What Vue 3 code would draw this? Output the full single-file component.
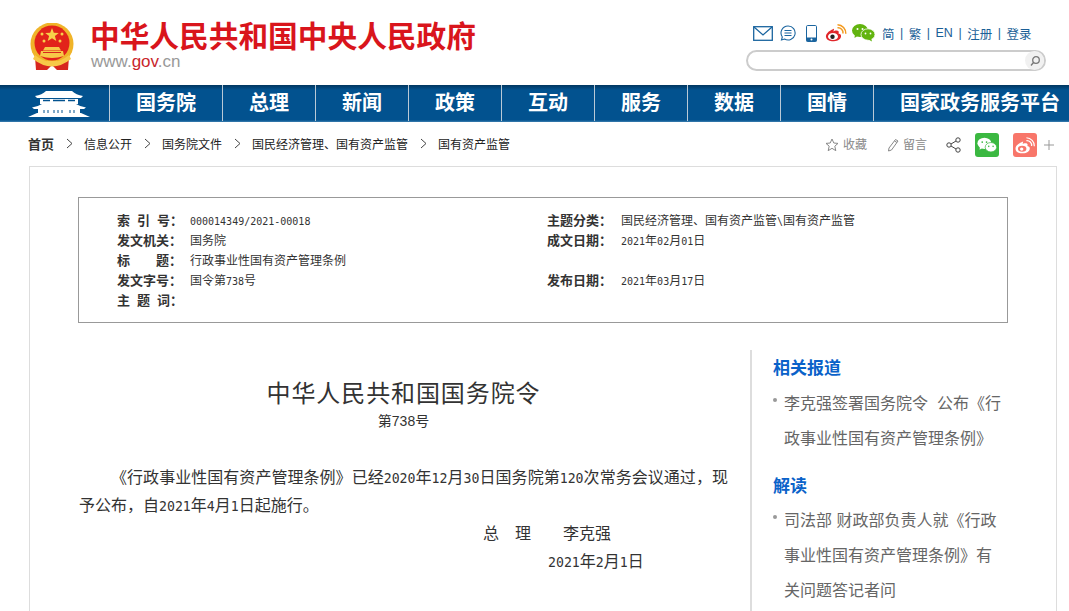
<template>
  <div class="page">
    <header class="top">
      <div class="brand">
        <svg class="emblem" width="44" height="47" viewBox="0 0 44 47">
          <path d="M5 34 L6 47 H17 L22 42 L27 47 H38 L39 34 Z" fill="#d7261e" />
          <circle cx="22" cy="21" r="21.500" fill="#f0b429" />
          <circle cx="22" cy="20" r="17.500" fill="#e2231a" />
          <path d="M5 32 Q22 46 39 32 L41 36 Q22 51 3 36 Z" fill="#f7c948" />
          <path d="M11 28 H33 L34 33 Q22 37 10 33 Z" fill="#f7c948" />
          <path d="M15 24 H29 L31 27.500 H13 Z" fill="#f7c948" />
          <rect x="13" y="29" width="18" height="1" fill="#d7261e" />
          <path d="M22 5 l1.800 4.800 5 .2 -3.900 3.100 1.400 4.900 -4.300 -2.800 -4.300 2.800 1.400 -4.900 -3.900 -3.100 5 -.2 Z" fill="#f7d04a" />
          <circle cx="12" cy="11" r="1.500" fill="#f7d04a" />
          <circle cx="32" cy="11" r="1.500" fill="#f7d04a" />
          <circle cx="14" cy="18" r="1.500" fill="#f7d04a" />
          <circle cx="30" cy="18" r="1.500" fill="#f7d04a" />
          <path d="M17 38 H27 V42 H17 Z" fill="#f7c948" />
        </svg>
        <div class="brand-text">
          <div class="site-name">中华人民共和国中央人民政府</div>
          <div class="site-url">www.<b>gov</b>.cn</div>
        </div>
      </div>
      <div class="tools">
        <div class="tool-row">
          <svg width="20" height="15" viewBox="0 0 20 15" fill="none" stroke="#1b659f" stroke-width="1.300">
            <rect x=".7" y=".7" width="18.600" height="13.600" />
            <path d="M1 1 L10 9 L19 1" />
          </svg>
          <svg class="ml7" width="16" height="16" viewBox="0 0 16 16" fill="none" stroke="#1b659f" stroke-width="1.100">
            <path d="M8 1 a7 7 0 1 1 -3.500 13 L1.500 15 L2.300 12 A7 7 0 0 1 8 1 Z" />
            <path d="M4.500 5.500 H11.500 M4.500 8 H11.500 M4.500 10.500 H11.500" />
          </svg>
          <svg class="ml10" width="11" height="17" viewBox="0 0 11 17">
            <rect x=".5" y=".5" width="10" height="16" rx="1.200" fill="#fff" stroke="#1b659f" />
            <rect x=".5" y="12.500" width="10" height="4" fill="#1b659f" />
            <circle cx="5.500" cy="14.500" r="1" fill="#fff" />
          </svg>
          <svg class="ml8" width="22" height="18" viewBox="0 0 21 18">
            <path d="M8 5 C3 7 0 10 .5 13 C1 16.500 5 17.500 8.500 17.300 C12.500 17 16 15 15.500 11.500 C15.300 10 13.500 9.800 13 9.500 C13.800 7.500 13 6.500 11 6.500 C9.500 6.500 8.500 7 8 7.500 C8.400 5.500 9 4.500 8 5 Z" fill="#e0262a" />
            <ellipse cx="7.500" cy="12.500" rx="5" ry="3.600" fill="#fff" />
            <circle cx="7" cy="12.800" r="2.200" fill="#222" />
            <path d="M12 3.800 A5 5 0 0 1 17.500 9.500" fill="none" stroke="#f39a1f" stroke-width="1.500" />
            <path d="M12 .8 A8.500 8.500 0 0 1 20.300 9.800" fill="none" stroke="#f39a1f" stroke-width="1.500" />
          </svg>
          <svg class="ml5" width="23" height="18" viewBox="0 0 23 18">
            <ellipse cx="8" cy="6.500" rx="8" ry="6.500" fill="#62b40f" />
            <path d="M3 10 L2.500 14 L7 11 Z" fill="#62b40f" />
            <ellipse cx="16" cy="10.500" rx="7" ry="5.700" fill="#62b40f" stroke="#fff" stroke-width=".8" />
            <path d="M19 14 L20 17.500 L15.500 15 Z" fill="#62b40f" />
            <circle cx="5.500" cy="5" r="1" fill="#fff" />
            <circle cx="10.500" cy="5" r="1" fill="#fff" />
            <circle cx="13.500" cy="9.500" r=".9" fill="#fff" />
            <circle cx="18.500" cy="9.500" r=".9" fill="#fff" />
          </svg>
          <div class="tool-links">
            <a>简</a><i>|</i><a>繁</a><i>|</i><a>EN</a><i>|</i><a>注册</a><i>|</i><a>登录</a>
          </div>
        </div>
        <div class="search">
          <span class="search-btn">
            <svg width="12" height="12" viewBox="0 0 12 12" fill="none" stroke="#777" stroke-width="1.300">
              <circle cx="7" cy="5" r="3.300" />
              <path d="M4.500 7.500 L2 10.500" />
            </svg>
          </span>
        </div>
      </div>
    </header>

    <nav class="nav">
      <div class="nav-home">
        <svg width="62" height="26" viewBox="0 0 62 26">
          <path d="M7 5 Q14 4 18 0 H44 Q48 4 55 5 L53 7 H9 Z" fill="#fff" />
          <rect x="12" y="8" width="38" height="5" fill="#fff" />
          <path d="M15 9.500 H22 M25 9.500 H37 M40 9.500 H47" stroke="#02528f" stroke-width="1.500" />
          <path d="M4 16.500 Q10 15.500 14 13 H48 Q52 15.500 58 16.500 L56 18 H6 Z" fill="#fff" />
          <rect x="10" y="18" width="42" height="4" fill="#fff" />
          <path d="M16 19 V22 M20 19 V22 M26 19 V22 M30 19 V22 M34 19 V22 M42 19 V22 M46 19 V22" stroke="#02528f" stroke-width="1" />
          <path d="M0 26 L9 22 H53 L62 26 Z" fill="#fff" />
        </svg>
      </div>
      <a v-for="item in navItems" :key="item" class="nav-item">{{ item }}</a>
    </nav>

    <div class="crumbs">
      <div class="crumb-list">
        <template v-for="(c, i) in crumbs" :key="c">
          <svg v-if="i > 0" class="chevron" width="7" height="11" viewBox="0 0 7 11" fill="none" stroke="#444">
            <path d="M1 1 L6 5.500 L1 10" />
          </svg>
          <a :class="{ first: i === 0 }">{{ c }}</a>
        </template>
      </div>
      <div class="share">
        <svg width="14" height="14" viewBox="0 0 14 14" fill="none" stroke="#888">
          <path d="M7 1 L8.800 5 L13 5.400 L9.800 8.200 L10.800 12.700 L7 10.300 L3.200 12.700 L4.200 8.200 L1 5.400 L5.200 5 Z" />
        </svg>
        <span class="share-text">收藏</span>
        <svg class="ml20" width="12" height="14" viewBox="0 0 12 14" fill="none" stroke="#888">
          <path d="M8.500 1.500 L11 3 L4.500 12 L1.500 13 L2 10 Z M7.500 3 L10 4.500" />
        </svg>
        <span class="share-text">留言</span>
        <svg class="ml19" width="15" height="16" viewBox="0 0 15 16" fill="none" stroke="#444">
          <circle cx="12" cy="3" r="2.200" />
          <circle cx="3" cy="8" r="2.200" />
          <circle cx="12" cy="13" r="2.200" />
          <path d="M5 7 L10 4 M5 9 L10 12" />
        </svg>
        <span class="badge wechat">
          <svg width="20" height="17" viewBox="0 0 23 18">
            <ellipse cx="8.500" cy="6.500" rx="8" ry="6.500" fill="#fff" />
            <path d="M3.500 10 L3 14 L7.500 11 Z" fill="#fff" />
            <ellipse cx="16" cy="11" rx="6.600" ry="5.400" fill="#fff" stroke="#3bb841" stroke-width=".8" />
            <circle cx="6" cy="5" r="1" fill="#3bb841" />
            <circle cx="11" cy="5" r="1" fill="#3bb841" />
            <circle cx="13.500" cy="10" r=".9" fill="#3bb841" />
            <circle cx="18.500" cy="10" r=".9" fill="#3bb841" />
          </svg>
        </span>
        <span class="badge weibo">
          <svg width="20" height="17" viewBox="0 0 21 18">
            <path d="M8 5 C3 7 0 10 .5 13 C1 16.500 5 17.500 8.500 17.300 C12.500 17 16 15 15.500 11.500 C15.300 10 13.500 9.800 13 9.500 C13.800 7.500 13 6.500 11 6.500 C9.500 6.500 8.500 7 8 7.500 C8.400 5.500 9 4.500 8 5 Z" fill="#fff" />
            <ellipse cx="7.500" cy="12.500" rx="4.500" ry="3.200" fill="#f8766a" />
            <circle cx="7" cy="12.800" r="1.800" fill="#fff" />
            <path d="M12 3.800 A5 5 0 0 1 17.500 9.500" fill="none" stroke="#fff" stroke-width="1.300" />
            <path d="M12 .8 A8.500 8.500 0 0 1 20.300 9.800" fill="none" stroke="#fff" stroke-width="1.300" />
          </svg>
        </span>
        <svg class="plus" width="10" height="10" viewBox="0 0 10 10" stroke="#999">
          <path d="M5 0 V10 M0 5 H10" />
        </svg>
      </div>
    </div>

    <main class="card">
      <section class="info">
        <div class="info-row" v-for="row in infoRows" :key="row[0]">
          <div class="info-cell wide">
            <span class="label">{{ row[0] }}</span>
            <span class="value"><template v-for="(s, i) in split(row[1])" :key="i"><span :class="{ num: s.num }">{{ s.text }}</span></template></span>
          </div>
          <div class="info-cell" v-if="row[2]">
            <span class="label right">{{ row[2] }}</span>
            <span class="value"><template v-for="(s, i) in split(row[3])" :key="i"><span :class="{ num: s.num }">{{ s.text }}</span></template></span>
          </div>
        </div>
      </section>

      <div class="article-wrap">
        <article class="article">
          <h1>中华人民共和国国务院令</h1>
          <div class="doc-no">第738号</div>
          <p class="body-text"><template v-for="(s, i) in split(bodyText)" :key="i"><span :class="{ num: s.num }">{{ s.text }}</span></template></p>
          <p class="sign sign-name">总　理　　李克强</p>
          <p class="sign sign-date"><template v-for="(s, i) in split('2021年2月1日')" :key="i"><span :class="{ num: s.num }">{{ s.text }}</span></template></p>
        </article>
        <aside class="side">
          <h3>相关报道</h3>
          <ul>
            <li>李克强签署国务院令&nbsp; 公布《行政事业性国有资产管理条例》</li>
          </ul>
          <h3 class="second">解读</h3>
          <ul>
            <li>司法部&nbsp;财政部负责人就《行政事业性国有资产管理条例》有关问题答记者问</li>
          </ul>
        </aside>
      </div>
    </main>
  </div>
</template>

<script setup>
const navItems = ['国务院', '总理', '新闻', '政策', '互动', '服务', '数据', '国情', '国家政务服务平台']
const crumbs = ['首页', '信息公开', '国务院文件', '国民经济管理、国有资产监管', '国有资产监管']
const infoRows = [
  ['索 引 号：', '000014349/2021-00018', '主题分类：', '国民经济管理、国有资产监管\\国有资产监管'],
  ['发文机关：', '国务院', '成文日期：', '2021年02月01日'],
  ['标　　题：', '行政事业性国有资产管理条例'],
  ['发文字号：', '国令第738号', '发布日期：', '2021年03月17日'],
  ['主 题 词：', '']
]
const bodyText = '《行政事业性国有资产管理条例》已经2020年12月30日国务院第120次常务会议通过，现予公布，自2021年4月1日起施行。'

// half-width digits, as on the original page
const split = (text) =>
  text.split(/([0-9/\\-]+)/).filter(Boolean).map((t) => ({ text: t, num: /^[0-9/\\-]+$/.test(t) }))
</script>

<style>
html,
body {
  margin: 0;
  background: #fff;
  overflow: hidden;
}
</style>

<style scoped>
.page {
  width: 1069px;
  height: 611px;
  overflow: hidden;
  font-family: "Liberation Sans", "Noto Sans CJK SC", sans-serif;
  color: #333;
}

.top {
  height: 85px;
  display: flex;
  justify-content: space-between;
  box-sizing: border-box;
  padding: 17px 23px 0 30px;
}

.brand {
  display: flex;
}

.emblem {
  margin-top: 6px;
}

.brand-text {
  margin-left: 16px;
}

.site-name {
  font-size: 29.700px;
  line-height: 36px;
  margin-top: 2px;
  font-weight: 700;
  color: #d9151c;
  white-space: nowrap;
}

.site-url {
  font-size: 17px;
  line-height: 18px;
  margin-top: -2px;
  margin-left: 1px;
  color: #999;
}

.site-url b {
  font-weight: 400;
  color: #c9262c;
}

.tools {
  width: 300px;
  padding-top: 6px;
}

.tool-row {
  display: flex;
  align-items: center;
  height: 20px;
  padding-left: 7px;
}

.ml5 { margin-left: 5px; }
.ml7 { margin-left: 7px; }
.ml8 { margin-left: 8px; }
.ml10 { margin-left: 10px; }
.ml19 { margin-left: 19px; }
.ml20 { margin-left: 20px; }

.tool-links {
  display: flex;
  align-items: center;
  margin-left: 7px;
  font-size: 12.500px;
  color: #1b5f97;
  white-space: nowrap;
}

.tool-links i {
  font-style: normal;
  margin: 0 5.500px;
}

.search {
  width: 300px;
  height: 21px;
  margin-top: 7px;
  box-sizing: border-box;
  border: 2px solid #ccc;
  border-radius: 11px;
  background: #fff;
  display: flex;
  justify-content: flex-end;
  align-items: center;
}

.search-btn {
  width: 19px;
  height: 19px;
  border-radius: 50%;
  background: #f1f1f1;
  display: flex;
  align-items: center;
  justify-content: center;
}

.nav {
  height: 37px;
  display: flex;
  background: linear-gradient(#01365f 0, #02528f 5px, #02528f 35px, #3d7fb0 37px);
}

.nav-home {
  width: 109px;
  box-sizing: border-box;
  padding: 6px 0 0 28px;
}

.nav-item {
  width: 93px;
  box-sizing: border-box;
  border-left: 1px solid #b9c9d6;
  text-align: center;
  font-size: 20px;
  font-weight: 700;
  line-height: 37px;
  color: #fff;
  height: 36px;
}

.nav-item:first-of-type {
  width: 113px;
}

.nav-item:last-child {
  width: 196px;
  padding-left: 26px;
  text-align: left;
  white-space: nowrap;
}

.crumbs {
  height: 44px;
  display: flex;
  justify-content: space-between;
  align-items: center;
  padding: 0 15px 0 28px;
}

.crumb-list {
  display: flex;
  align-items: center;
  font-size: 12px;
  color: #222;
  white-space: nowrap;
  padding-bottom: 2px;
}

.crumb-list a.first {
  font-size: 13px;
  font-weight: 700;
  color: #333;
}

.chevron {
  margin: 0 11px 0 12px;
}

.share {
  display: flex;
  align-items: center;
  font-size: 12px;
  color: #888;
  padding-top: 2px;
}

.share-text {
  margin-left: 4px;
  margin-bottom: 3px;
}

.badge {
  width: 24px;
  height: 24px;
  border-radius: 3px;
  margin-left: 14px;
  display: flex;
  align-items: center;
  justify-content: center;
}

.wechat {
  background: #3bb841;
}

.weibo {
  background: #f8766a;
}

.plus {
  margin-left: 7px;
}

.card {
  margin: 0 12px 0 29px;
  border: 1px solid #ddd;
  border-bottom: 0;
  box-sizing: border-box;
  padding: 30px 48px 0 48px;
  height: 445px;
}

.info {
  height: 126px;
  box-sizing: border-box;
  border: 1px solid #999;
  padding: 13px 0 0 38px;
}

.info-row {
  display: flex;
  height: 20px;
  line-height: 20px;
}

.info-cell {
  display: flex;
}

.info-cell.wide {
  width: 430px;
}

.label {
  width: 73px;
  font-size: 13px;
  font-weight: 700;
  word-spacing: 3.400px;
  color: #333;
  white-space: pre;
}

.label.right {
  width: 74px;
}

.value {
  font-size: 12px;
  color: #333;
  white-space: nowrap;
}

.value .num {
  font-family: "DejaVu Sans Mono", monospace;
  font-size: 10px;
  line-height: 1;
}

.article-wrap {
  display: flex;
  margin-top: 27px;
}

.article {
  width: 649px;
  margin-left: 1px;
  box-sizing: border-box;
}

.article h1 {
  margin: 27px 0 0;
  text-align: center;
  font-size: 24px;
  line-height: 34px;
  font-weight: 400;
  letter-spacing: .9px;
  color: #333;
}

.doc-no {
  text-align: center;
  font-size: 14px;
  line-height: 20px;
}

.body-text {
  margin: 33px 0 0;
  font-size: 16px;
  line-height: 28px;
  text-indent: 32px;
  text-align: justify;
}

.body-text .num,
.sign .num {
  font-family: "DejaVu Sans Mono", monospace;
  font-size: 13.200px;
  line-height: 1;
}

.sign {
  margin: 0;
  font-size: 16px;
  line-height: 28px;
  white-space: nowrap;
}

.sign-name {
  padding-left: 404px;
}

.sign-date {
  padding-left: 469px;
}

.side {
  margin-left: 22px;
  width: 255px;
  height: 300px;
  box-sizing: border-box;
  border-left: 2px solid #ddd;
  padding-left: 21px;
  padding-right: 1px;
}

.side h3 {
  margin: 9px 0 0;
  font-size: 17px;
  line-height: 20px;
  font-weight: 700;
  color: #0a62c9;
}

.side h3.second {
  margin-top: 21px;
}

.side ul {
  list-style: none;
  margin: 7px 0 0;
  padding: 0;
}

.side h3.second + ul {
  margin-top: 6px;
}

.side li {
  position: relative;
  padding-left: 11px;
  font-size: 16px;
  line-height: 35px;
  color: #666;
}

.side li::before {
  content: "";
  position: absolute;
  left: 0;
  top: 12px;
  width: 4px;
  height: 4px;
  border-radius: 50%;
  background: #999;
}
</style>
